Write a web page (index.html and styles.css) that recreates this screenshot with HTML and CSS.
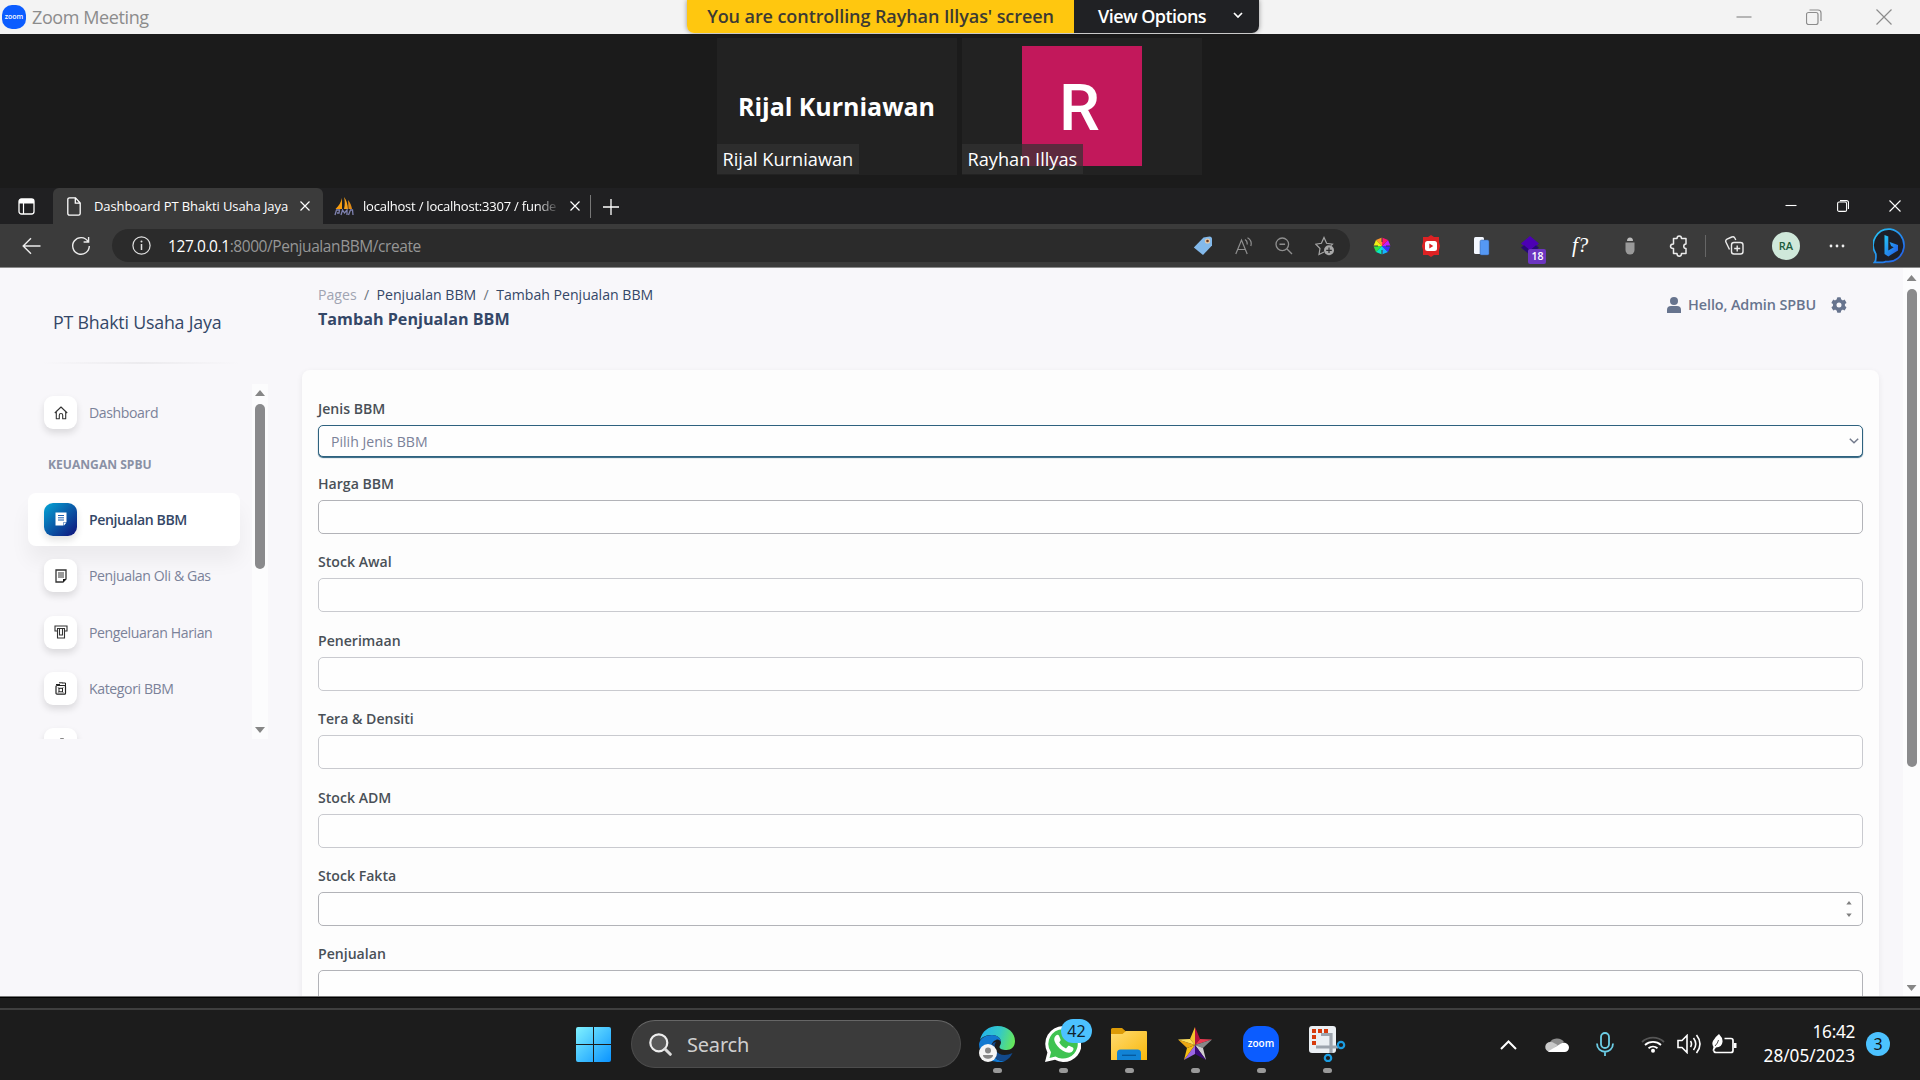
FILE: index.html
```html
<!DOCTYPE html>
<html lang="id">
<head>
<meta charset="utf-8">
<title>Zoom Meeting</title>
<link rel="stylesheet" href="styles.css">
</head>
<body>
<div class="screen">
  <header class="titlebar">
    <svg class="zoom-logo" viewBox="0 0 24 24"><rect width="24" height="24" rx="10" fill="#0b5cff"/><text x="12" y="14.2" text-anchor="middle" class="logo-text" font-size="7">zoom</text></svg>
    <span class="titlebar-name">Zoom Meeting</span>
    <div class="titlebar-controls">
      <svg width="16" height="16" viewBox="0 0 16 16"><path d="M0.500 8h15"/></svg>
      <svg width="16" height="16" viewBox="0 0 16 16"><rect x="0.500" y="3.500" width="11.500" height="12" rx="2"/><path d="M3.500 1h8.500a3 3 0 0 1 3 3v8"/></svg>
      <svg width="16" height="16" viewBox="0 0 16 16"><path d="M0.500 0.500l15 15M15.500 0.500l-15 15"/></svg>
    </div>
    <div class="banner">
      <div class="banner-status"><span>You are controlling Rayhan Illyas' screen</span></div>
      <div class="banner-menu"><span>View Options</span><svg width="10" height="7" viewBox="0 0 10 7"><path d="M1 1l4 4 4-4" fill="none" stroke="#fff" stroke-width="1.700"/></svg></div>
    </div>
  </header>

  <section class="stage">
    <div class="tile"><span class="tile-title">Rijal Kurniawan</span><span class="tile-name">Rijal Kurniawan</span></div>
    <div class="tile"><div class="avatar">R</div><span class="tile-name">Rayhan Illyas</span></div>
  </section>

  <nav class="tabs">
    <div class="tab-actions"><svg width="17" height="17" viewBox="0 0 17 17"><rect x="1" y="1" width="15" height="15" rx="2.500" fill="none" stroke="#fff" stroke-width="1.300"/><path d="M1 3a2 2 0 0 1 2-2h11a2 2 0 0 1 2 2v2.500H1z" fill="#fff"/><path d="M5.500 5v11" stroke="#fff" stroke-width="1.200"/></svg></div>
    <div class="tab tab-active">
      <svg width="14" height="19" viewBox="0 0 14 19"><path d="M2.500.8h6L13.200 6v10.500a1.700 1.700 0 0 1-1.700 1.700h-9A1.700 1.700 0 0 1 .8 16.500v-14A1.700 1.700 0 0 1 2.500.8zM8.300 1v5.200h4.800" fill="none" stroke="#fff" stroke-width="1.300"/></svg>
      <span class="tab-title t1">Dashboard PT Bhakti Usaha Jaya</span>
      <svg class="x" width="10" height="10" viewBox="0 0 10 10"><path d="M.5.5l9 9M9.500.5l-9 9"/></svg>
    </div>
    <div class="tab tab-second">
      <svg width="20" height="19" viewBox="0 0 20 19"><path d="M8 1v11H1.500C5 9 7 5 8 1z" fill="#f89c0e"/><path d="M10 0c1 4 1 8 0 12h4C13.500 7 12.500 3 10 0z" fill="#f6a11c"/><path d="M14 3c2.500 3 3.500 6 4 9h-3.500z" fill="#e08a16"/><path d="M1 18l1.500-5h3l-.5 3H3M7 18l1.500-5 2 3 2.500-3v5M14.500 18l2-5h2l.5 5" fill="none" stroke="#7f82b0" stroke-width="1.300"/></svg>
      <span class="tab-title t2">localhost / localhost:3307 / funde</span>
      <svg class="x" width="10" height="10" viewBox="0 0 10 10"><path d="M.5.5l9 9M9.500.5l-9 9"/></svg>
    </div>
    <div class="tab-new"><svg width="16" height="16" viewBox="0 0 16 16"><path d="M8 0v16M0 8h16" stroke="#fff" stroke-width="1.300"/></svg></div>
    <div class="win-controls">
      <svg width="12" height="14" viewBox="0 0 12 14"><path d="M.5 6.500h11"/></svg>
      <svg width="12" height="12" viewBox="0 0 12 12"><rect x=".6" y="2" width="9" height="9.400" rx="1.500"/><path d="M3 .6h6.500a2 2 0 0 1 2 2V9"/></svg>
      <svg width="12" height="12" viewBox="0 0 12 12"><path d="M.5.5l11 11M11.500.5l-11 11"/></svg>
    </div>
  </nav>

  <div class="toolbar">
    <svg class="back" width="19" height="18" viewBox="0 0 19 18"><path d="M9 1.200L1.200 9 9 16.800M1.200 9H18.500" fill="none" stroke="#ececec" stroke-width="1.400"/></svg>
    <svg class="reload" width="20" height="20" viewBox="0 0 20 20"><path d="M17 5.500A8.300 8.300 0 1 0 18.300 10M17.600 1v5h-5" fill="none" stroke="#ececec" stroke-width="1.400"/></svg>
    <div class="address">
      <svg width="19" height="19" viewBox="0 0 19 19"><circle cx="9.500" cy="9.500" r="8.600" fill="none" stroke="#e0e0e0" stroke-width="1.200"/><path d="M9.500 8v6" stroke="#e0e0e0" stroke-width="1.500"/><circle cx="9.500" cy="5.500" r="1" fill="#e0e0e0"/></svg>
      <span class="url"><b>127.0.0.1</b>:8000/PenjualanBBM/create</span>
      <div class="address-icons">
        <svg width="20" height="20" viewBox="0 0 20 20"><path d="M10.500 1.500L16.500.5a2.500 2.500 0 0 1 2.500 2.500v6.500L10 19 .8 11.500z" fill="#83b9ea"/><circle cx="14.500" cy="5" r="2.600" fill="#e7c9a5"/><circle cx="14.500" cy="5" r="1.300" fill="#6b3b25"/></svg>
        <svg width="18" height="18" viewBox="0 0 18 18"><path d="M.8 17L6.500 3l5.700 14M2.600 12.500h7.800M10 2.500c1.600 1 2.500 3 2 5M12.500.8c3 1.700 4.300 5 3.300 8.200" fill="none" stroke="#8f8f8f" stroke-width="1.200"/></svg>
        <svg width="18" height="18" viewBox="0 0 18 18"><circle cx="7.300" cy="7.300" r="6.300" fill="none" stroke="#8f8f8f" stroke-width="1.300"/><path d="M4.500 7.300h5.600M12 12l5 5" stroke="#8f8f8f" stroke-width="1.400"/></svg>
        <svg width="20" height="20" viewBox="0 0 20 20"><path d="M9 16l-5 2.500 1-6L.8 8.200l5.600-.9L9 1.500l2.600 5.800 5.900.9-1.500 1.500" fill="none" stroke="#a5a5a5" stroke-width="1.200"/><circle cx="14" cy="14.300" r="5" fill="#a8a8a8"/><path d="M14 11.500v5.600M11.200 14.300h5.600" stroke="#2b2b2b" stroke-width="1.200"/></svg>
      </div>
    </div>
    <div class="extensions">
      <svg width="20" height="20" viewBox="0 0 20 20"><path d="M10 10V1.500L4 4z" fill="#ff9b2b"/><path d="M10 10L4 4 1.500 10z" fill="#efef14"/><path d="M10 10H1.500L4 16z" fill="#32e342"/><path d="M10 10l-6 6 6 2.500z" fill="#08e8c2"/><path d="M10 10v8.500l6-2.500z" fill="#15b5ff"/><path d="M10 10l6 6 2.500-6z" fill="#3c2bff"/><path d="M10 10h8.500L16 4z" fill="#c01cff"/><path d="M10 10l6-6-6-2.500z" fill="#ff1670"/><path d="M10 0v6M10 14v6M.5 10H6M14 10h5.500" stroke="#3b3b3b" stroke-width="1"/></svg>
      <svg width="20" height="22" viewBox="0 0 20 22"><path d="M2 2h5l3-2 3 2h5v5l1 4-1 4v5h-5l-3 2-3-2H2v-5l-1-4 1-4z" fill="#dd2224"/><rect x="4" y="6" width="12" height="10" rx="2.500" fill="#fff"/><path d="M8.300 8.500v5l4-2.500z" fill="#dd2224"/></svg>
      <svg width="18" height="20" viewBox="0 0 18 20"><rect x="2" y="1" width="10" height="17" rx="1.500" fill="#f3f7ff"/><rect x="8" y="4" width="9" height="15" rx="1.500" fill="#5598f4" stroke="#3b5f9a" stroke-width=".5"/></svg>
      <div class="ext-badge"><svg width="20" height="20" viewBox="0 0 20 20"><path d="M10 0l9 7.500-9 7.500-9-7.500z" fill="#4c00b4"/><path d="M1 11.500l3-2.300 6 5 6-5 3 2.300L10 19z" fill="#260a73"/></svg><span>18</span></div>
      <span class="ext-f">f?</span>
      <svg width="12" height="20" viewBox="0 0 12 20"><path d="M3 5a3 3.500 0 0 1 6 0z" fill="#bdbdbd"/><path d="M1.500 6.500h9V14a4.500 4.500 0 0 1-9 0z" fill="#999"/></svg>
      <svg width="20" height="22" viewBox="0 0 20 22"><path d="M4.500 3.500H8c0-3.500 4.500-3.500 4.500 0H17v5.500c-3 0-3 4.500 0 4.500v5h-4.500c0 3.500-4.500 3.500-4.500 0H4.500V13.500c-4 0-4-4.500 0-4.500z" fill="none" stroke="#ececec" stroke-width="1.500" stroke-linejoin="round"/></svg>
    </div>
    <span class="toolbar-sep"></span>
    <div class="toolbar-end">
      <svg width="19" height="19" viewBox="0 0 19 19"><rect x="6.500" y="6.500" width="11.500" height="11.500" rx="2.500" fill="none" stroke="#ececec" stroke-width="1.400"/><path d="M12.200 9.500v6M9.200 12.500h6M4.500 13.500L1 6.200a2.300 2.300 0 0 1 1-3L6.800 1a2.300 2.300 0 0 1 3 1l1 2" fill="none" stroke="#ececec" stroke-width="1.400"/></svg>
      <span class="profile">RA</span>
      <svg class="more" width="16" height="4" viewBox="0 0 16 4"><circle cx="2" cy="2" r="1.400"/><circle cx="8" cy="2" r="1.400"/><circle cx="14" cy="2" r="1.400"/></svg>
      <svg class="bing" width="34" height="36" viewBox="0 0 34 36"><defs><linearGradient id="bg1" x1="0" y1="0" x2="1" y2="1"><stop offset="0" stop-color="#25c7f5"/><stop offset="1" stop-color="#2357e8"/></linearGradient></defs><path d="M17.300 1.200A15.600 16 0 1 1 13 33.500q-1.500.8-3.200.9H1.500q2-2 1.300-8.500A15.600 16 0 0 1 17.300 1.200z" fill="#1d1f27" stroke="url(#bg1)" stroke-width="1.700"/><path d="M11.500 7l3.800 1.600v13.800l5.400-3.200-2.600-1.300-1.500-4 8.400 3.200v5.300l-9.700 6-3.800-2.300z" fill="url(#bg1)"/></svg>
    </div>
  </div>

  <main class="page">
    <aside class="sidebar">
      <div class="brand">PT Bhakti Usaha Jaya</div>
      <div class="brand-rule"></div>
      <div class="side-scroll">
        <div class="side-list">
          <div class="side-item"><span class="side-icon"><svg width="14" height="14" viewBox="0 0 14 14"><path d="M.8 7L7 1l6.200 6M2.300 5.800v6.900h3V9.200a1.700 1.700 0 0 1 3.400 0v3.500h3V5.800" fill="none" stroke="#333" stroke-width="1.100" stroke-linejoin="round"/></svg></span><span>Dashboard</span></div>
          <div class="side-heading">KEUANGAN SPBU</div>
          <div class="side-item side-active"><span class="side-icon"><svg width="12" height="14" viewBox="0 0 12 14"><path d="M.5.5h11V10h-3v3.500h-8z" fill="#fff"/><path d="M11.500 10.500l-2.500 3v-3z" fill="#fff"/><path d="M3 3.500h6M3 5.800h6M3 8h6" stroke="#1a5fae" stroke-width="1"/></svg></span><span>Penjualan BBM</span></div>
          <div class="side-item"><span class="side-icon"><svg width="12" height="14" viewBox="0 0 12 14"><path d="M1 1h10v9l-3 3H1z" fill="none" stroke="#333" stroke-width="1.300"/><path d="M3 4h6M3 6h6M3 8h6" stroke="#333" stroke-width="1"/><path d="M11 10H8v3z" fill="#111"/></svg></span><span>Penjualan Oli &amp; Gas</span></div>
          <div class="side-item"><span class="side-icon"><svg width="14" height="14" viewBox="0 0 14 14"><path d="M3 6H1V1h12v5h-2M3 3.500h8M3.500 3.500V13h7V3.500M5.500 4v6h3V4" fill="none" stroke="#333" stroke-width="1.100"/></svg></span><span>Pengeluaran Harian</span></div>
          <div class="side-item"><span class="side-icon"><svg width="12" height="14" viewBox="0 0 12 14"><rect x="1" y="4.500" width="9.500" height="8.700" rx="1" fill="none" stroke="#222" stroke-width="1.200"/><path d="M1 3.500h4M4 1.800h3.500M7 2h3.500v3M3.200 6.500l5 5M8.200 6.500l-5 5" stroke="#222" stroke-width="1" fill="none"/><rect x="4" y="7.300" width="3.500" height="3.500" fill="#fff" stroke="#222"/></svg></span><span>Kategori BBM</span></div>
          <div class="side-item"><span class="side-icon"><svg width="14" height="14" viewBox="0 0 14 14"><circle cx="8" cy="1.500" r="2" fill="#888"/></svg></span><span>Kategori Oli</span></div>
        </div>
        <div class="side-bar"><i class="up"></i><i class="thumb"></i><i class="down"></i></div>
      </div>
    </aside>

    <section class="content">
      <div class="content-head">
        <div>
          <div class="crumbs"><span class="muted">Pages</span><i>/</i><span>Penjualan BBM</span><i>/</i><span>Tambah Penjualan BBM</span></div>
          <h1>Tambah Penjualan BBM</h1>
        </div>
        <div class="user">
          <svg width="14" height="16" viewBox="0 0 14 16"><circle cx="7" cy="4" r="4"/><path d="M0 16v-3a4 4 0 0 1 4-4h6a4 4 0 0 1 4 4v3z"/></svg>
          <span>Hello, Admin SPBU</span>
          <svg class="gear" width="16" height="16" viewBox="0 0 512 512"><path d="M487 316l-43-25c4-23 4-47 0-70l43-25c5-3 7-9 6-14-12-36-31-69-56-96-4-4-10-5-15-2l-43 25c-18-15-39-27-61-35V25c0-6-4-11-9-12-37-8-75-8-110 0-6 1-10 6-10 12v49c-22 8-43 20-61 35L86 84c-5-3-11-2-15 2-25 27-44 60-56 96-2 5 1 11 6 14l43 25c-4 23-4 47 0 70l-43 25c-5 3-7 9-6 14 12 36 31 69 56 96 4 4 10 5 15 2l43-25c18 15 39 27 61 35v49c0 6 4 11 9 12 37 8 75 8 110 0 6-1 10-6 10-12v-49c22-8 43-20 61-35l43 25c5 3 11 2 15-2 25-27 44-60 56-96 1-5-2-11-7-14zM256 336a80 80 0 1 1 0-160 80 80 0 0 1 0 160z"/></svg>
        </div>
      </div>
      <form class="card">
        <div class="field"><label>Jenis BBM</label><div class="control select"><span>Pilih Jenis BBM</span><svg width="10" height="6" viewBox="0 0 10 6"><path d="M.8.8L5 4.800 9.200.8" fill="none" stroke="#737a8c" stroke-width="1.500"/></svg></div></div>
        <div class="field"><label>Harga BBM</label><div class="control dark"></div></div>
        <div class="field"><label>Stock Awal</label><div class="control"></div></div>
        <div class="field"><label>Penerimaan</label><div class="control"></div></div>
        <div class="field"><label>Tera &amp; Densiti</label><div class="control"></div></div>
        <div class="field"><label>Stock ADM</label><div class="control"></div></div>
        <div class="field"><label>Stock Fakta</label><div class="control dark number"><svg width="6" height="16" viewBox="0 0 6 16"><path d="M3 0l2.700 3.500H.3zM3 16l2.700-3.500H.3z" fill="#808080"/></svg></div></div>
        <div class="field"><label>Penjualan</label><div class="control dark"></div></div>
      </form>
    </section>
    <div class="page-bar"><i class="up"></i><i class="thumb"></i><i class="down"></i></div>
  </main>

  <div class="dock-gap"></div>
  <footer class="taskbar">
    <svg class="start" width="35" height="35" viewBox="0 0 35 35"><defs><linearGradient id="win" x1="0" y1="0" x2="1" y2="1"><stop offset="0" stop-color="#80f2ff"/><stop offset="1" stop-color="#0a93ff"/></linearGradient></defs><path d="M2 0h15v17H0V2a2 2 0 0 1 2-2zM18 0h15a2 2 0 0 1 2 2v15H18zM0 18h17v17H2a2 2 0 0 1-2-2zM18 18h17v15a2 2 0 0 1-2 2H18z" fill="url(#win)"/></svg>
    <div class="search"><svg width="23" height="23" viewBox="0 0 23 23"><circle cx="9.800" cy="9.800" r="8.500" fill="#5a5a5a" stroke="#eee" stroke-width="2.200"/><path d="M16 16l5.300 5.300" stroke="#dcdcdc" stroke-width="3" stroke-linecap="round"/></svg><span>Search</span></div>
    <div class="apps">
      <div class="app"><svg width="36" height="36" viewBox="0 0 36 36"><defs><linearGradient id="e1" x1="0" y1=".3" x2="1" y2=".5"><stop offset="0" stop-color="#22b3ee"/><stop offset=".55" stop-color="#35c9c5"/><stop offset="1" stop-color="#66e75b"/></linearGradient></defs><path d="M1 14C3 5 10 0 18.500 0 29 0 36 7 36 15c0 6-4 9-8.500 9-4 0-7-1-7-3 0-1.500 1.500-2 1.500-5 0-4-4-7-9-7C7 9 3 11 1 14z" fill="url(#e1)"/><path d="M0 18C1 12 7 9 13 9c5 0 9 3 9 7-1-2-3-3-5-2-3 1-5 4-5 8 0 7 6 14 14 13-3 1.500-7 1.500-10 .5C7 35 0 27 0 18z" fill="#1279d1"/><path d="M12 22c0 7 6 14 14 13 4-2 6-5 7.500-8-6 3-14 3-17-3-1.500-3-1-6 .5-8-3 0-5 3-5 6z" fill="#12498c"/><circle cx="9" cy="27" r="9" fill="#f5f5f5"/><circle cx="9" cy="24.500" r="3" fill="#888"/><path d="M4 29h10c0 5-10 5-10 0z" fill="#888"/></svg></div>
      <div class="app"><svg width="36" height="36" viewBox="0 0 36 36"><path d="M18 0a18 18 0 1 1-8 33.800L0 36l2.400-9.500A18 18 0 0 1 18 0z" fill="#fff"/><path d="M18 3.200a14.700 14.700 0 1 1-7.500 27.300L4.500 32l1.500-5.800A14.700 14.700 0 0 1 18 3.200z" fill="#3fc351"/><path d="M11 9.500c1-1 2.500-.8 3 .3l1.500 3.400c.5 1-.3 2-1.300 3.100 1.500 3 3.800 4.900 6.800 6.100l2-2.200c.5-.6 1-.5 1.600-.3l3.300 1.600c1 .5.800 3-1.200 4.500-2 1.300-5 1-9.200-1.500-4-2.500-7-6.500-8-9.500-.8-2.500.2-4.300 1.500-5.500z" fill="#fff"/></svg><span class="app-badge">42</span></div>
      <div class="app"><svg width="36" height="36" viewBox="0 0 36 36"><defs><linearGradient id="fo" x1="0" y1="0" x2="1" y2="1"><stop offset="0" stop-color="#ffdb70"/><stop offset="1" stop-color="#f8b70b"/></linearGradient></defs><path d="M0 3.500A1.500 1.500 0 0 1 1.500 2H11l4 3.500V9H0z" fill="#dd9b07"/><path d="M0 8h11.500l3.500-3h20a1 1 0 0 1 1 1v28H0z" fill="url(#fo)"/><path d="M6 34v-7a3.500 3.500 0 0 1 3.500-3.500h17A3.500 3.500 0 0 1 30 27v7z" fill="#1183d5"/><path d="M11 29.300h14" stroke="#06589c" stroke-width="1.300"/></svg></div>
      <div class="app"><svg width="36" height="36" viewBox="0 0 36 36"><path d="M18 19V1l-5 12z" fill="#f4c52c"/><path d="M18 19V1l5 12z" fill="#b4123f"/><path d="M18 19l5-6 12 .5z" fill="#ec3b52"/><path d="M18 19l17-5.500L26 22z" fill="#888"/><path d="M18 19l8 3 3 12z" fill="#d0cfd0"/><path d="M18 19l11 15-11-6z" fill="#3a0b79"/><path d="M18 19v9L7 34z" fill="#9b66e5"/><path d="M18 19L7 34l3-12z" fill="#f6bd13"/><path d="M18 19l-8 3L1 13.500z" fill="#eda814"/><path d="M18 19L1 13.500l12-.5z" fill="#ffe05c"/></svg></div>
      <div class="app"><svg width="36" height="36" viewBox="0 0 36 36"><rect width="36" height="36" rx="14" fill="#0b5cff"/><text x="18" y="21" text-anchor="middle" class="logo-text" font-size="10">zoom</text></svg></div>
      <div class="app"><svg width="37" height="36" viewBox="0 0 37 36"><rect width="27" height="27" rx="3" fill="#ebeff3"/><path d="M3 3h4v4H3zM9 3h4v4H9zM15 3h4v4h-4zM3 9h4v4H3zM3 15h4v4H3z" fill="#d73a0b"/><path d="M12 8.500h10V27M7 21h22" fill="none" stroke="#9da4ad" stroke-width="3.200"/><circle cx="32" cy="19" r="3.200" fill="none" stroke="#1b9de2" stroke-width="2.200"/><circle cx="19" cy="32" r="3.200" fill="none" stroke="#1b9de2" stroke-width="2.200"/></svg></div>
    </div>
    <div class="tray">
      <svg class="tr-up" width="17" height="11" viewBox="0 0 17 11"><path d="M1 10l7.500-7.500L16 10" fill="none" stroke="#fff" stroke-width="2"/></svg>
      <svg class="tr-cloud" width="24" height="16" viewBox="0 0 24 16"><path d="M4.500 7A8 7 0 0 1 19 6l-7 5z" fill="#8d8d8d"/><path d="M5 16a5 5 0 0 1 .5-10c3 0 5 2 7 3l-7 7z" fill="#c9c9c9"/><path d="M3 15.500L16 7.500c3-2 8 0 8 4A4.500 4.500 0 0 1 19.500 16H5z" fill="#fff"/></svg>
      <svg class="tr-mic" width="18" height="24" viewBox="0 0 18 24"><rect x="5" y="1" width="8" height="15" rx="4" fill="none" stroke="#6ccde5" stroke-width="1.800"/><path d="M1 11.500c0 11 16 11 16 0M9 20v4" fill="none" stroke="#6ccde5" stroke-width="1.800"/></svg>
      <svg class="tr-wifi" width="24" height="18" viewBox="0 0 24 18"><path d="M1 7a16 16 0 0 1 22 0" fill="none" stroke="#555" stroke-width="1.800"/><path d="M4 10a12 12 0 0 1 16 0M7.500 13.200a7 7 0 0 1 9 0" fill="none" stroke="#fff" stroke-width="1.800"/><circle cx="12" cy="15.800" r="2" fill="#fff"/></svg>
      <svg class="tr-vol" width="24" height="20" viewBox="0 0 24 20"><path d="M1 6.500h4l5-5v17l-5-5H1zM13.500 7q2 3 0 6M16.500 4q4.500 6 0 12M19.500 1q7 9 0 18" fill="none" stroke="#fff" stroke-width="1.600"/></svg>
      <svg class="tr-bat" width="25" height="20" viewBox="0 0 25 20"><path d="M12.500 4.500H19a2 2 0 0 1 2 2v10a2 2 0 0 1-2 2H4a2 2 0 0 1-2-2" fill="none" stroke="#fff" stroke-width="1.700"/><path d="M22 9h2.500v5H22z" fill="#fff"/><path d="M7 0q4 4 3.500 8-.5 5-6.500 5.500L1.500 17l-1-.5 1-3.500Q-.500 10 1 7 3 3 7 0z" fill="#fff"/><path d="M3 12q3-3 3.500-6" fill="none" stroke="#1c1c1c" stroke-width=".8"/></svg>
      <div class="clock"><span class="time">16:42</span><span class="date">28/05/2023</span></div>
      <span class="notif">3</span>
    </div>
  </footer>
</div>
</body>
</html>
```
FILE: styles.css
```css
* { box-sizing: border-box; }
body { margin: 0; background: #1b1b1b; font-family: "Open Sans", "Noto Sans", sans-serif; }
svg { display: block; flex: none; }
span { white-space: nowrap; }
i { font-style: normal; }
.screen { width: 1920px; height: 1080px; overflow: hidden; display: flex; flex-direction: column; }
.logo-text { font-family: "Open Sans", sans-serif; font-weight: 600; fill: #fff; }

.titlebar { height: 34px; flex: none; background: #f3f3f3; display: flex; align-items: center; padding-left: 2px; position: relative; }
.zoom-logo { width: 24px; height: 24px; }
.titlebar-name { margin-left: 6px; font-size: 18px; color: #8c8c8c; letter-spacing: -0.4px; }
.titlebar-controls { margin-left: auto; display: flex; gap: 54px; padding-right: 28px; }
.titlebar-controls svg { fill: none; stroke: #8c8c8c; stroke-width: 1.2; }
.banner { position: absolute; left: 687px; top: 0; height: 33px; display: flex; border-radius: 0 0 7px 7px; overflow: hidden; font-size: 18px; font-weight: 600; box-shadow: 0 0 5px rgba(0,0,0,.4); }
.banner-status { width: 387px; background: #ffc70f; color: #3c3a33; display: flex; justify-content: center; align-items: center; letter-spacing: -0.08px; padding-bottom: 2px; }
.banner-menu { width: 185px; background: #202124; color: #fff; display: flex; align-items: center; justify-content: space-between; padding: 0 16px 2px 24px; letter-spacing: -0.55px; }

.stage { height: 154px; flex: none; display: flex; justify-content: center; gap: 5px; padding: 4px 2px 0 0; }
.tile { width: 240px; height: 137px; background: #222; position: relative; display: flex; justify-content: center; align-items: center; }
.tile-title { color: #fff; font-size: 25px; font-weight: 700; letter-spacing: -0.03px; padding-bottom: 2px; }
.tile-name { position: absolute; left: 0; bottom: 1px; height: 30px; padding: 0 6px; background: rgba(50,50,50,.7); color: #fff; font-size: 18.2px; line-height: 31px; }
.avatar { width: 120px; height: 120px; background: #c2185b; color: #fff; font-family: Roboto, sans-serif; font-size: 65px; font-weight: 500; line-height: 124px; text-align: center; padding-right: 4px; margin-bottom: 1px; }

.tabs { height: 36px; flex: none; background: #202022; display: flex; align-items: stretch; color: #fff; font-size: 13px; letter-spacing: -0.08px; }
.tab-actions { width: 53px; display: flex; align-items: center; justify-content: center; }
.tab { display: flex; align-items: center; }
.tab-title { padding-bottom: 1px; }
.tab .x { stroke: #fff; stroke-width: 1.2; margin-left: auto; }
.tab-active { width: 270px; background: #3b3b3b; border-radius: 6px 6px 0 0; padding: 0 13px 0 14px; }
.t1 { margin-left: 13px; width: 196px; }
.tab-second { width: 268px; padding: 0 11px 0 11px; }
.t2 { margin-left: 9px; width: 197px; overflow: hidden; letter-spacing: -0.22px; -webkit-mask-image: linear-gradient(90deg, #000 88%, transparent); mask-image: linear-gradient(90deg, #000 88%, transparent); }
.tab-new { display: flex; align-items: center; margin: 7px 0 6px -1px; padding-left: 12px; border-left: 1px solid #777; }
.win-controls { margin-left: auto; display: flex; align-items: center; gap: 40px; padding-right: 19px; }
.win-controls svg { fill: none; stroke: #fff; stroke-width: 1.1; }

.toolbar { height: 44px; flex: none; background: #3b3b3b; display: flex; align-items: center; border-bottom: 1px solid #8a8a8a; padding: 0 13px 0 22px; }
.reload { margin-left: 30px; }
.address { margin-left: 21px; width: 1238px; height: 33px; flex: none; border-radius: 17px; background: #2b2b2b; display: flex; align-items: center; padding: 0 15px 0 20px; }
.url { margin-left: 17px; color: #969696; font-size: 15.5px; letter-spacing: -0.42px; }
.url b { color: #fff; font-weight: 400; }
.address-icons { margin-left: auto; display: flex; align-items: center; gap: 22px; }
.extensions { margin-left: 7px; width: 347px; flex: none; display: grid; grid-template-columns: repeat(7, 1fr); align-items: center; justify-items: center; }
.ext-badge { position: relative; }
.ext-badge span { position: absolute; left: 8px; top: 13px; width: 18px; height: 15px; background: #6c35c0; border-radius: 2px; color: #fff; font-size: 10.5px; line-height: 15px; text-align: center; font-weight: 600; }
.ext-f { font: italic 21px "Liberation Serif", serif; color: #fff; }
.toolbar-sep { width: 1px; height: 22px; margin-left: 1px; background: #666; }
.toolbar-end { margin-left: auto; display: flex; align-items: center; }
.profile { margin-left: 28px; width: 28px; height: 28px; border-radius: 50%; background: #cfe8da; color: #1d5c3d; font-size: 11px; font-weight: 600; line-height: 28px; text-align: center; }
.more { margin-left: 29px; fill: #eee; }
.bing { margin-left: 28px; }

.page { height: 729px; flex: none; background: #f8f7fa; display: flex; overflow: hidden; border-bottom: 1px solid #777; }
.sidebar { width: 302px; flex: none; }
.brand { margin: 40px 0 0 53px; font-size: 17.8px; line-height: 28px; color: #344767; letter-spacing: -0.2px; }
.brand-rule { margin: 26px 0 0 43px; width: 197px; height: 2px; background: linear-gradient(90deg, transparent, #ecebee, transparent); }
.side-scroll { margin-top: 20px; height: 355px; width: 269px; display: flex; overflow: hidden; }
.side-list { width: 252px; padding-left: 28px; flex: none; }
.side-item { width: 212px; height: 53px; margin-bottom: 3.300px; display: flex; align-items: center; padding-left: 16px; font-size: 14.1px; color: #7b8299; letter-spacing: -0.4px; border-radius: 8px; }
.side-icon { width: 33px; height: 33px; margin-right: 12px; border-radius: 9px; background: #fff; display: flex; align-items: center; justify-content: center; box-shadow: 0 4px 7px rgba(20,20,20,.13); flex: none; }
.side-item:first-child { margin-top: 2px; }
.side-active { background: #fff; color: #344767; font-weight: 600; box-shadow: 0 15px 20px rgba(0,0,0,.05); }
.side-active .side-icon { background: linear-gradient(135deg, #03a5d6, #10107a); }
.side-heading { padding: 13px 0 0 20px; height: 50.700px; font-size: 12.1px; line-height: 19px; font-weight: 700; color: #8a91a5; }
.side-bar, .page-bar { background: #fcfcfd; display: flex; flex-direction: column; align-items: center; flex: none; }
.side-bar { width: 16px; padding: 6px 0; }
.up, .down { width: 10px; height: 6px; background: #868686; }
.up { clip-path: polygon(50% 0, 100% 100%, 0 100%); }
.down { clip-path: polygon(0 0, 100% 0, 50% 100%); margin-top: auto; }
.thumb { width: 10px; background: #8a8a8c; border-radius: 5px; margin-top: 8px; }
.side-bar .thumb { height: 165px; }

.content { width: 1601px; flex: none; }
.content-head { height: 102px; display: flex; justify-content: space-between; padding: 16px 56px 0 16px; }
.crumbs { display: flex; font-size: 14.1px; line-height: 22px; color: #344767; }
.crumbs i { margin: 0 7.4px; color: #6c757d; }
.muted { color: #a0a4b2; }
h1 { margin: 1px 0 0; font-size: 16.15px; line-height: 24px; font-weight: 700; color: #344767; }
.user { display: flex; align-items: center; height: 24px; margin-top: 9px; font-size: 14.400px; font-weight: 600; letter-spacing: -0.1px; color: #67748e; }
.user svg { fill: #67748e; }
.user span { margin: 0 15px 0 7px; padding-bottom: 1px; }
.card { width: 1577px; height: 700px; background: #fdfdfd; border-radius: 8px; padding: 24px 16px; box-shadow: 0 2px 6px rgba(0,0,0,.07); }
.field { height: 78.400px; padding-top: 3px; }
.field:first-child { height: 73px; padding-top: 0; }
label { display: block; font-size: 14.1px; line-height: 28px; font-weight: 600; color: #495057; }
.field:first-child label { line-height: 29px; }
.control { height: 34px; margin-top: 2px; border: 1px solid #c9cacf; border-radius: 5px; background: #fefefe; }
.control.dark { border-color: #b2b3b8; }
.select { height: 32px; border-color: #2e627f; box-shadow: 0 1px 1px #2e627f; display: flex; align-items: center; justify-content: space-between; padding: 0 3px 0 12px; font-size: 14.1px; color: #7b8299; }
.number { display: flex; align-items: center; justify-content: flex-end; padding-right: 10px; }
.page-bar { width: 17px; padding: 7px 0 5px; }
.page-bar .thumb { height: 478px; }

.dock-gap { height: 11px; flex: none; background: #1b1b1b; border-top: 1px solid #000; }
.taskbar { height: 72px; flex: none; background: #1c1c1c; border-top: 2px solid #3f3f3f; display: flex; align-items: center; padding: 0 30px 6px 576px; font-family: "Noto Sans", sans-serif; }
.taskbar .start { margin-top: 4px; }
.search { margin: 4px 0 0 20px; width: 330px; height: 48px; border-radius: 24px; background: #3b3b3b; border: 1px solid #4c4c4c; border-top-color: #666; display: flex; align-items: center; padding-left: 17px; color: #cfcfcf; font-size: 20px; }
.search span { margin-left: 15px; letter-spacing: -0.2px; }
.apps { display: flex; gap: 30px; margin: 4px 0 0 18px; }
.app { width: 36px; height: 36px; position: relative; }
.app::after { content: ""; position: absolute; left: 14px; top: 42px; width: 9px; height: 5px; border-radius: 3px; background: #999; }
.app-badge { position: absolute; left: 16px; top: -7px; width: 31px; height: 24px; border-radius: 12px; background: #4cc2ff; color: #10222c; font-size: 16px; line-height: 24px; text-align: center; }
.tray { margin: 4px 0 0 auto; display: flex; align-items: center; color: #fff; }
.tr-cloud { margin-left: 28px; }
.tr-mic { margin-left: 27px; }
.tr-wifi { margin-left: 27px; }
.tr-vol { margin-left: 12px; }
.tr-bat { margin-left: 11px; }
.clock { width: 118px; display: flex; flex-direction: column; align-items: flex-end; font-size: 17.2px; line-height: 24px; }
.time { letter-spacing: -0.3px; }
.notif { margin-left: 11px; width: 24px; height: 24px; border-radius: 50%; background: #4cc2ff; color: #111; font-size: 16px; line-height: 24px; text-align: center; }
```
